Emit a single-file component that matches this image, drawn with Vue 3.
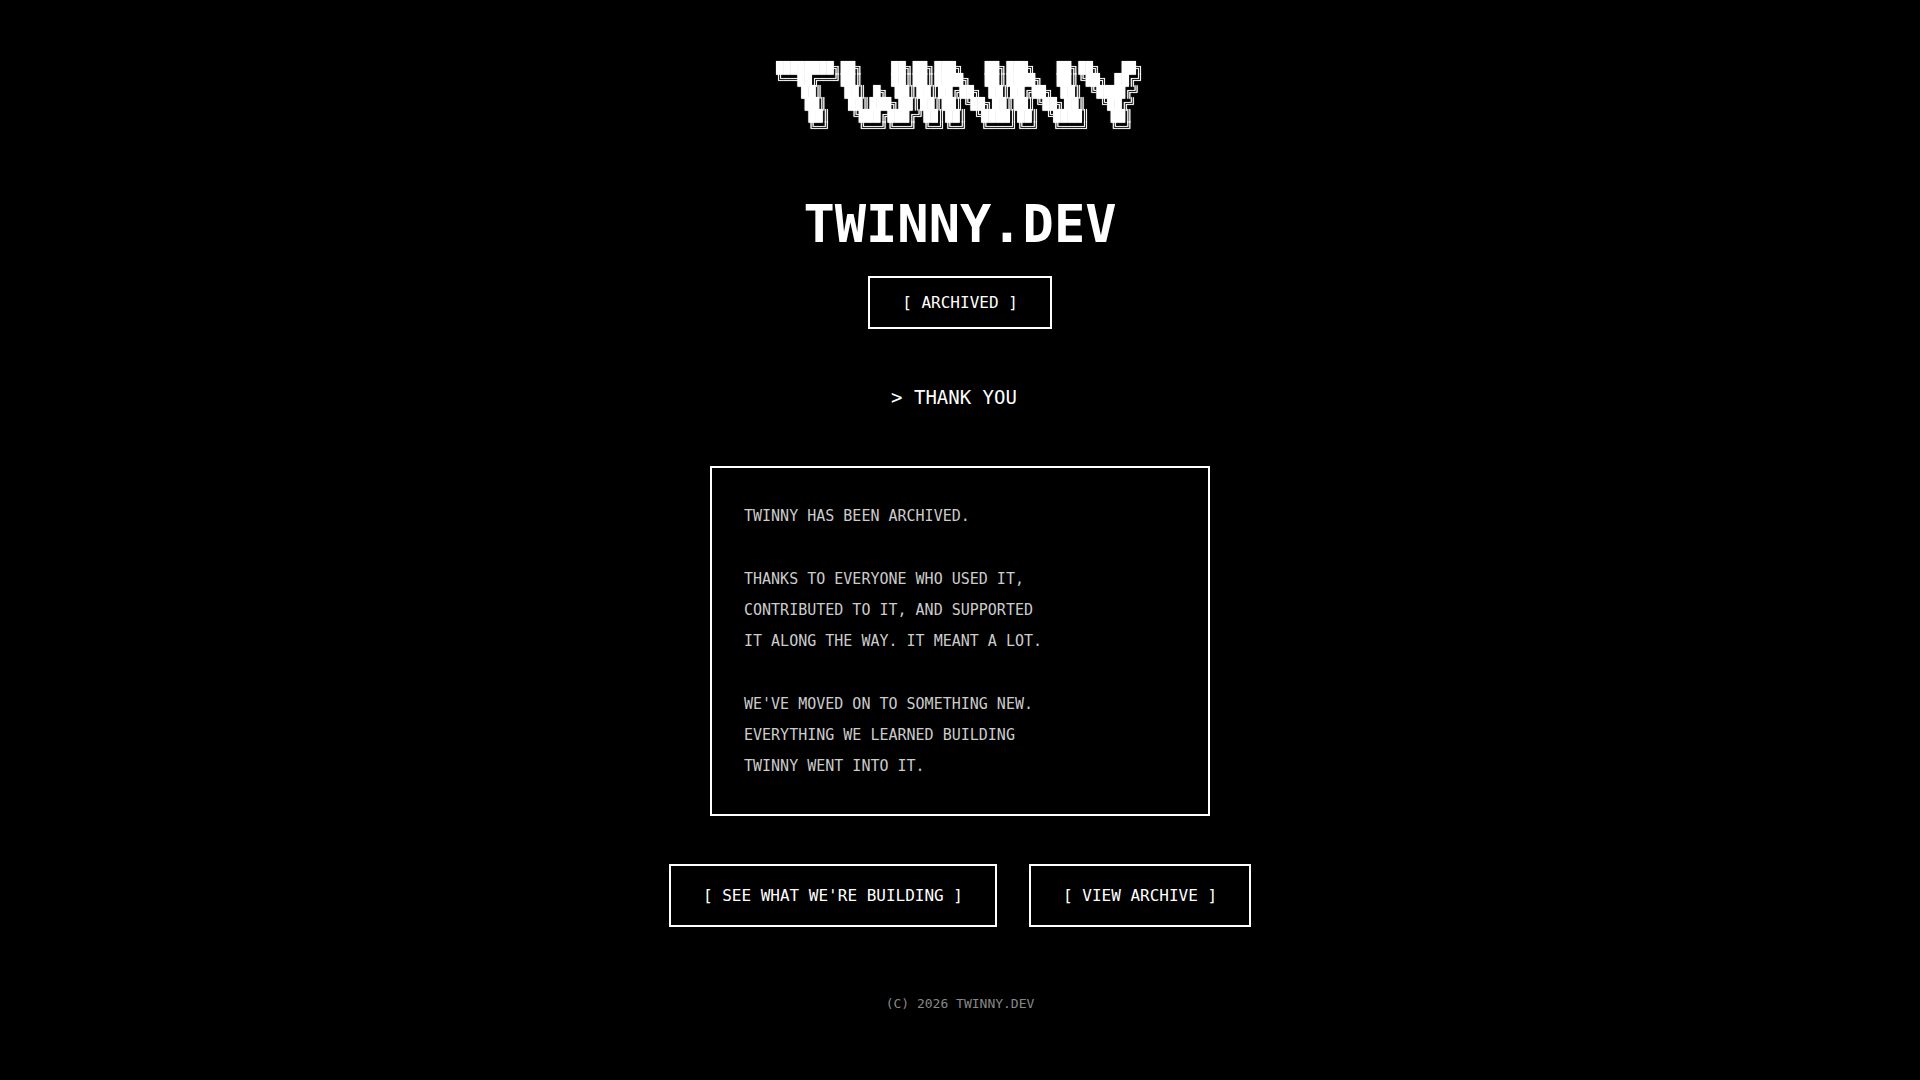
<script setup>
const logo = [
  '████████╗██╗    ██╗██╗███╗   ██╗███╗   ██╗██╗   ██╗',
  '╚══██╔══╝██║    ██║██║████╗  ██║████╗  ██║╚██╗ ██╔╝',
  '   ██║   ██║ █╗ ██║██║██╔██╗ ██║██╔██╗ ██║ ╚████╔╝',
  '   ██║   ██║███╗██║██║██║╚██╗██║██║╚██╗██║  ╚██╔╝',
  '   ██║   ╚███╔███╔╝██║██║ ╚████║██║ ╚████║   ██║',
  '   ╚═╝    ╚══╝╚══╝ ╚═╝╚═╝  ╚═══╝╚═╝  ╚═══╝   ╚═╝',
].join('\n')

const paragraphs = [
  ['TWINNY HAS BEEN ARCHIVED.'],
  [
    'THANKS TO EVERYONE WHO USED IT,',
    'CONTRIBUTED TO IT, AND SUPPORTED',
    'IT ALONG THE WAY. IT MEANT A LOT.',
  ],
  [
    "WE'VE MOVED ON TO SOMETHING NEW.",
    'EVERYTHING WE LEARNED BUILDING',
    'TWINNY WENT INTO IT.',
  ],
]

const links = ["[ SEE WHAT WE'RE BUILDING ]", '[ VIEW ARCHIVE ]']
</script>

<template>
  <main class="page">
    <pre class="logo" aria-hidden="true">{{ logo }}</pre>
    <h1 class="title">TWINNY.DEV</h1>
    <div class="status">[ ARCHIVED ]</div>
    <h2 class="thanks">&gt; THANK YOU<span class="cursor"></span></h2>
    <section class="message">
      <p v-for="(lines, i) in paragraphs" :key="i">{{ lines.join('\n') }}</p>
    </section>
    <nav class="links">
      <a v-for="label in links" :key="label" class="link" href="#">{{ label }}</a>
    </nav>
    <footer class="footer">(C) 2026 TWINNY.DEV</footer>
  </main>
</template>

<style>
body {
  margin: 0;
  background: #000;
}
</style>

<style scoped>
.page {
  display: flex;
  flex-direction: column;
  align-items: center;
  justify-content: center;
  box-sizing: border-box;
  min-height: 100vh;
  padding: 32px;
  background: #000;
  color: #fff;
  font-family: "DejaVu Sans Mono", "Liberation Mono", monospace;
  font-size: 16px;
}

.logo {
  margin: 0 0 58px;
  font-family: "Liberation Mono", "DejaVu Sans Mono", monospace;
  font-size: 12px;
  font-weight: 700;
  line-height: 12px;
  text-align: center;
  text-shadow: 0 0 1px #fff;
  will-change: transform;
}

.title {
  margin: 0 0 20px;
  font-size: 52px;
  font-weight: 700;
  line-height: 64px;
}

.status {
  margin-bottom: 48px;
  padding: 0 32px;
  border: 2px solid #fff;
  line-height: 49px;
}

.thanks {
  display: flex;
  align-items: center;
  margin: 0 0 49px;
  font-size: 19px;
  font-weight: 400;
  line-height: 40px;
  white-space: pre;
}

.cursor {
  width: 12px;
}

.message {
  display: flex;
  flex-direction: column;
  gap: 32px;
  box-sizing: border-box;
  width: 100%;
  max-width: 500px;
  margin-bottom: 48px;
  padding: 33px 32px 32px;
  border: 2px solid #fff;
  color: #ccc;
  font-size: 15px;
  line-height: 31px;
}

.message p {
  margin: 0;
  white-space: pre-line;
}

.links {
  display: flex;
  flex-wrap: wrap;
  justify-content: center;
  gap: 32px;
  margin-bottom: 62px;
}

.link {
  padding: 0 32px;
  border: 2px solid #fff;
  color: #fff;
  line-height: 59px;
  text-decoration: none;
}

.link:hover {
  background: #fff;
  color: #000;
}

.footer {
  color: #888;
  font-size: 13px;
  line-height: 29px;
}
</style>
